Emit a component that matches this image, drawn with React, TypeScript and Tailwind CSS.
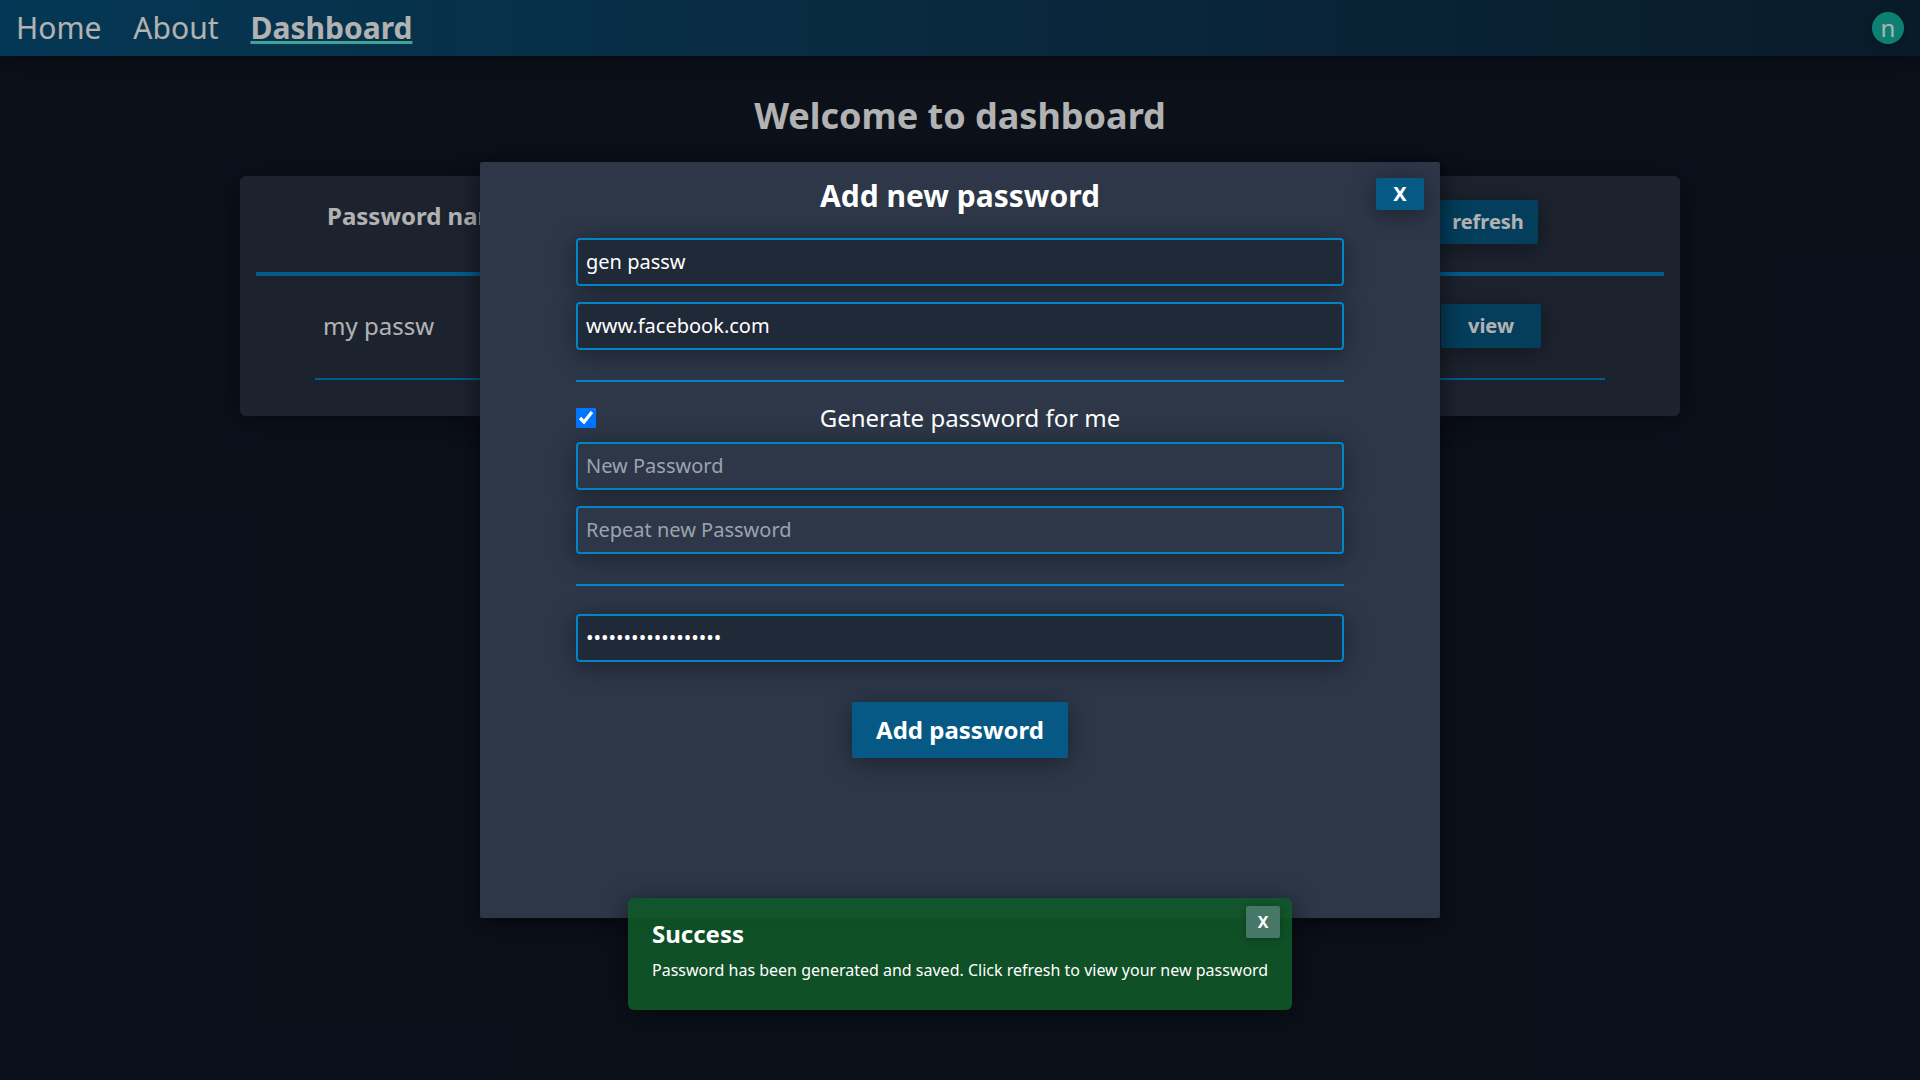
const field =
  "h-12 w-full rounded-[4px] border-2 border-[#0284c7] px-2 pb-0.5 text-xl text-white placeholder:text-[#9ca3af] placeholder:opacity-100 outline-none shadow-[0_4px_26px_rgba(0,0,0,0.4)]";
const glow = "shadow-[0_4px_26px_rgba(0,0,0,0.4)]";

function Header() {
  return (
    <header className="flex h-14 items-center justify-between bg-gradient-to-r from-[#07507a] to-[#0d283c] px-4 shadow-[0_4px_26px_rgba(0,0,0,0.4)]">
      <nav className="flex items-center gap-8 text-3xl">
        <a>Home</a>
        <a>About</a>
        <a className="font-bold underline decoration-[#5eead4] decoration-[3px] underline-offset-2 [text-decoration-skip-ink:none]">
          Dashboard
        </a>
      </nav>
      <div className="flex size-8 items-center justify-center rounded-full bg-[#14b8a6] text-2xl leading-8 shadow-[0_2px_10px_rgba(0,0,0,0.25)]">
        n
      </div>
    </header>
  );
}

function PasswordTable() {
  return (
    <section className={`mx-auto mt-10 h-60 w-[1440px] rounded-md bg-[#293344] px-4 pt-6 ${glow}`}>
      <div className="flex h-[76px] justify-between border-b-4 border-[#0284c7]">
        <h2 className="ml-[71px] text-2xl font-bold">Password name</h2>
        <button className={`mr-[126px] h-11 w-[100px] rounded-[2px] bg-[#075985] text-xl font-bold ${glow}`}>
          refresh
        </button>
      </div>
      <div className="ml-[59px] mr-[59px] flex h-[104px] justify-between border-b-2 border-[#0284c7] pt-7">
        <span className="ml-2 mt-1.5 text-2xl">my passw</span>
        <button className={`mr-16 h-11 w-[100px] rounded-[2px] bg-[#075985] text-xl font-bold ${glow}`}>view</button>
      </div>
    </section>
  );
}

function AddPasswordModal() {
  return (
    <div className="relative h-[756px] w-[960px] rounded-[2px] bg-[#2d3748] px-24 pt-4 text-white shadow-[0_4px_24px_rgba(0,0,0,0.6)]">
      <button className={`absolute right-4 top-4 h-8 w-12 rounded-[2px] bg-[#075985] text-xl font-bold leading-8 ${glow}`}>
        X
      </button>
      <h2 className="text-center text-3xl font-bold">Add new password</h2>
      <form className="mt-6 flex flex-col">
        <div className="flex flex-col gap-4">
          <input className={`${field} bg-[#1f2937]`} defaultValue="gen passw" />
          <input className={`${field} bg-[#1f2937]`} defaultValue="www.facebook.com" />
        </div>
        <hr className="mt-[30px] border-t-2 border-[#0284c7]" />
        <label className="mt-5 flex h-8 items-center text-2xl">
          <input type="checkbox" defaultChecked className="size-5" />
          <span className="flex-1 text-center">Generate password for me</span>
        </label>
        <div className="mt-2 flex flex-col gap-4">
          <input className={`${field} bg-[#2d3748]`} placeholder="New Password" />
          <input className={`${field} bg-[#2d3748]`} placeholder="Repeat new Password" />
        </div>
        <hr className="mt-[30px] border-t-2 border-[#0284c7]" />
        <input type="password" className={`${field} mt-7 bg-[#1f2937]`} defaultValue="abcdefghijklmnopqr" />
        <button type="button" className={`mt-10 h-14 w-[216px] self-center rounded-[2px] bg-[#075985] text-2xl font-bold ${glow}`}>
          Add password
        </button>
      </form>
    </div>
  );
}

function Toast() {
  return (
    <div className="absolute left-[628px] top-[898px] h-28 w-[664px] rounded-md bg-[#0f5828]/90 px-6 pt-5 text-white shadow-[0_4px_24px_rgba(0,0,0,0.5)]">
      <button className="absolute right-3 top-2 h-8 w-[34px] rounded-[2px] bg-[#477766] font-bold shadow-[0_2px_8px_rgba(0,0,0,0.25)]">
        X
      </button>
      <h3 className="text-2xl font-bold">Success</h3>
      <p className="mt-2 whitespace-nowrap text-base">
        Password has been generated and saved. Click refresh to view your new password
      </p>
    </div>
  );
}

export default function App() {
  return (
    <div className="relative h-screen overflow-hidden bg-[#101725] font-['Noto_Sans',sans-serif] text-white">
      <Header />
      <h1 className="mt-10 text-center text-4xl font-bold">Welcome to dashboard</h1>
      <PasswordTable />
      <div className="absolute inset-0 flex items-start justify-center bg-black/30 pt-[162px]">
        <AddPasswordModal />
      </div>
      <Toast />
    </div>
  );
}
